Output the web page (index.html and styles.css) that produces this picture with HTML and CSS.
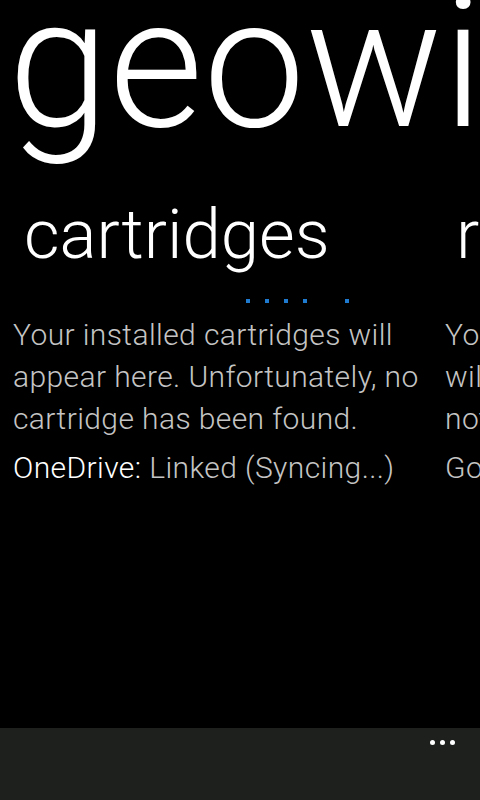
FILE: index.html
```html
<!DOCTYPE html>
<html lang="en">
<head>
<meta charset="utf-8">
<title>geowigo</title>
<link rel="stylesheet" href="styles.css">
</head>
<body>
<div class="phone">
  <div class="pano">
    <h1 class="title">geowigo</h1>
    <div class="items">
      <section class="item">
        <h2 class="item-header">cartridges</h2>
        <div class="progress">
          <span class="dot"></span><span class="dot"></span><span class="dot"></span><span class="dot"></span><span class="dot dot-far"></span>
        </div>
        <p class="body">Your installed cartridges will appear here. Unfortunately, no cartridge has been found.</p>
        <p class="body status"><span class="label">OneDrive:</span> Linked (Syncing...)</p>
      </section>
      <section class="item">
        <h2 class="item-header">recent</h2>
        <div class="progress"></div>
        <p class="body">Your saved games<br>will be listed here. There's<br>nothing to show yet.</p>
        <p class="body status">Go to cartridges to play.</p>
      </section>
    </div>
  </div>
  <div class="appbar">
    <div class="more"><span></span><span></span><span></span></div>
  </div>
</div>
</body>
</html>
```
FILE: styles.css
```css
html, body {
  margin: 0;
  padding: 0;
  background: #000;
}
.phone {
  width: 480px;
  height: 800px;
  display: flex;
  flex-direction: column;
  overflow: hidden;
  background: #000;
  color: #fff;
  font-family: "Roboto", "Open Sans", sans-serif;
}
.pano {
  flex: 1;
  overflow: hidden;
}
.title {
  margin: 0;
  padding-left: 8px;
  font-weight: 300;
  font-size: 182px;
  line-height: 128px;
  height: 128px;
  white-space: nowrap;
  color: #fff;
}
.items {
  display: flex;
  gap: 12px;
  padding-left: 13px;
}
.item {
  flex: 0 0 420px;
  display: flex;
  flex-direction: column;
}
.item-header {
  margin: 67px 0 0 0;
  padding-left: 11px;
  font-weight: 300;
  font-size: 69px;
  line-height: 80px;
  height: 80px;
  white-space: nowrap;
}
.progress {
  display: flex;
  height: 4px;
  margin-top: 24px;
  padding-left: 233px;
  gap: 15px;
}
.dot {
  width: 4px;
  height: 4px;
  background: #1e7bd0;
}
.dot-far {
  margin-left: 23px;
}
.body {
  margin: 11px 0 0 0;
  font-size: 30px;
  line-height: 42px;
  letter-spacing: 0.4px;
  color: #c4c4c4;
  font-weight: 300;
}
.status {
  margin-top: 7px;
  white-space: nowrap;
}
.label {
  color: #fff;
}
.appbar {
  flex: 0 0 72px;
  background: #1d201d;
  display: flex;
  justify-content: flex-end;
}
.more {
  display: flex;
  gap: 5px;
  padding: 12px 25px 0 0;
}
.more span {
  width: 5px;
  height: 5px;
  border-radius: 50%;
  background: #fff;
}
```
